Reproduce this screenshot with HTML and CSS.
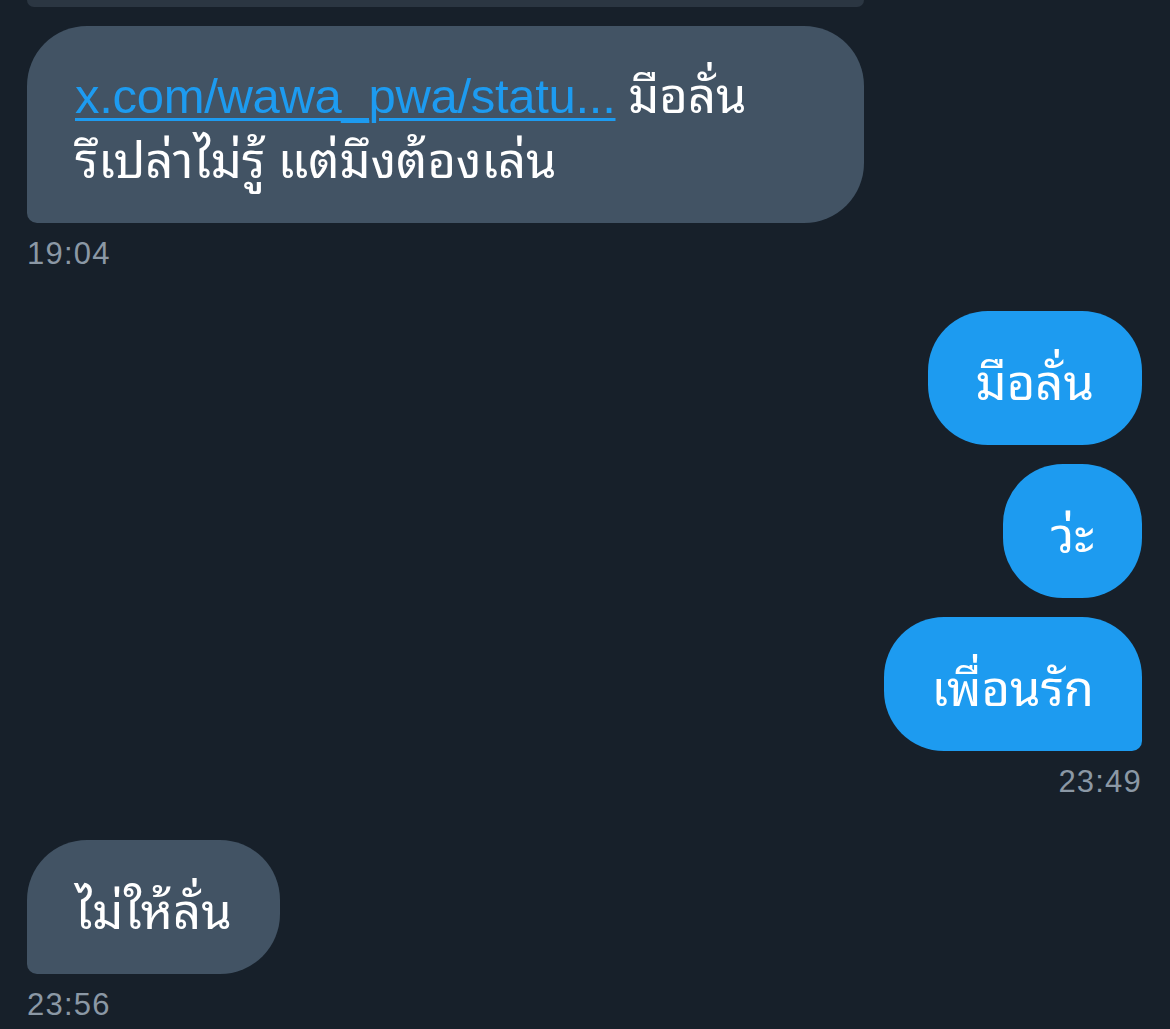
FILE: index.html
```html
<!DOCTYPE html>
<html lang="th">
<head>
<meta charset="utf-8">
<title>Messages</title>
<link rel="stylesheet" href="styles.css">
</head>
<body>
<main class="thread">
  <div class="card-stub"></div>

  <div class="msg received">
    <div class="bubble gray tail-left wide">
      <a class="link" href="#">x.com/wawa_pwa/statu...</a> มือลั่น<br>รึเปล่าไม่รู้ แต่มึงต้องเล่น
    </div>
    <div class="time">19:04</div>
  </div>

  <div class="msg sent">
    <div class="bubble blue">มือลั่น</div>
    <div class="bubble blue">ว่ะ</div>
    <div class="bubble blue tail-right">เพื่อนรัก</div>
    <div class="time">23:49</div>
  </div>

  <div class="msg received">
    <div class="bubble gray tail-left">ไม่ให้ลั่น</div>
    <div class="time">23:56</div>
  </div>
</main>
</body>
</html>
```

FILE: styles.css
```css
html, body {
  margin: 0;
  padding: 0;
  background: #17202a;
  height: 100%;
  overflow: hidden;
}

body {
  font-family: "Noto Sans Thai Looped", "Loma", "Garuda", "Noto Sans Thai", "Liberation Sans", sans-serif;
  color: #ffffff;
}

.thread {
  display: flex;
  flex-direction: column;
  padding: 0 28px 0 27px;
}

.card-stub {
  height: 7px;
  width: 837px;
  background: #2b3642;
  border-radius: 0 0 34px 34px;
}

.msg {
  display: flex;
  flex-direction: column;
  gap: 19px;
}

.msg.received {
  align-items: flex-start;
  margin-top: 19px;
}

.msg.sent {
  align-items: flex-end;
  margin-top: 39px;
}

.msg + .msg.received {
  margin-top: 40px;
}

.bubble {
  font-size: 49px;
  line-height: 60px;
  padding: 37px 48px;
  border-radius: 60px;
  max-width: 741px;
  white-space: nowrap;
}

.bubble.wide {
  box-sizing: border-box;
  width: 837px;
  max-width: none;
  padding-top: 35px;
  padding-bottom: 37px;
}

.bubble.gray {
  background: #425364;
}

.bubble.blue {
  background: #1d9bf0;
}

.bubble.tail-left {
  border-bottom-left-radius: 10px;
}

.bubble.tail-right {
  border-bottom-right-radius: 10px;
}

.link {
  font-family: "Liberation Sans", sans-serif;
  letter-spacing: -0.3px;
  color: #1d9bf0;
  text-decoration: underline;
  text-decoration-thickness: 3px;
  text-underline-offset: 5px;
}

.time {
  font-family: "Liberation Sans", sans-serif;
  font-size: 31px;
  letter-spacing: 1.2px;
  line-height: 36px;
  color: #8b98a5;
  margin-top: -6px;
}
```
